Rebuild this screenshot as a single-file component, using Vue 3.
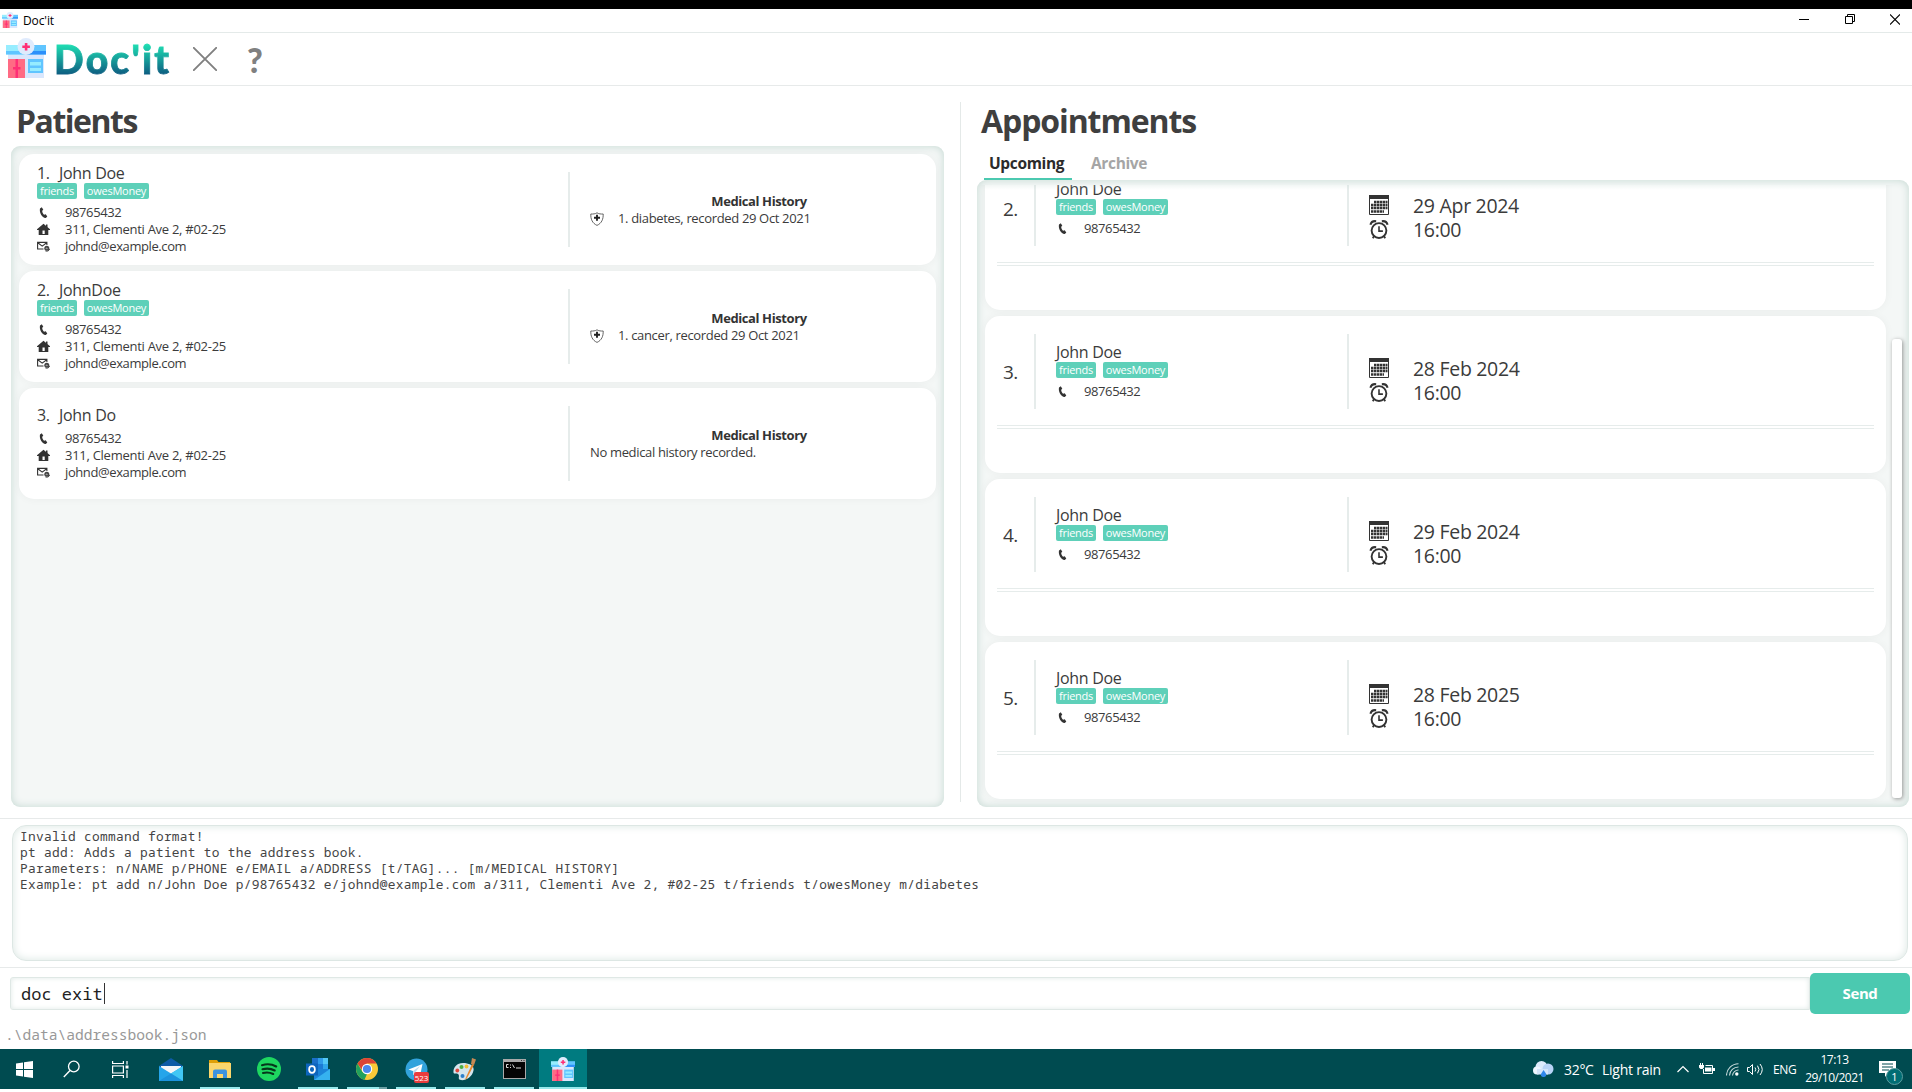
<script setup>
const email = 'johnd@example.com'
const address = '311, Clementi Ave 2, #02-25'
const phone = '98765432'
const tags = ['friends', 'owesMoney']

const patients = [
  { id: 1, name: 'John Doe', tags, history: ['1. diabetes, recorded 29 Oct 2021'] },
  { id: 2, name: 'JohnDoe', tags, history: ['1. cancer, recorded 29 Oct 2021'] },
  { id: 3, name: 'John Do', tags: [], history: [] },
]

const appointments = [
  { id: 2, date: '29 Apr 2024', time: '16:00' },
  { id: 3, date: '28 Feb 2024', time: '16:00' },
  { id: 4, date: '29 Feb 2024', time: '16:00' },
  { id: 5, date: '28 Feb 2025', time: '16:00' },
]

const feedback = [
  'Invalid command format!',
  'pt add: Adds a patient to the address book.',
  'Parameters: n/NAME p/PHONE e/EMAIL a/ADDRESS [t/TAG]... [m/MEDICAL HISTORY]',
  'Example: pt add n/John Doe p/98765432 e/johnd@example.com a/311, Clementi Ave 2, #02-25 t/friends t/owesMoney m/diabetes',
]
</script>

<template>
  <div class="screen">
    <svg class="defs" width="0" height="0">
      <symbol id="clinic" viewBox="0 0 40 40">
        <path d="M2 16h36v24H2z" fill="#d9e7fd" />
        <path d="M2 21h17v19H2z" fill="#ff6b84" />
        <path d="M9.5 21h2.500v19H9.500z" fill="#ff2f76" />
        <path d="M7 29h7.500v2.500H7z" fill="#ff2f76" />
        <path d="M22 21h15v14H22z" fill="#60c5ff" />
        <path d="M24 24h11v3.500H24zM24 30h11v3H24z" fill="#96ecff" />
        <path d="M0 7h20v9.500H0z" fill="#97edff" />
        <path d="M20 7h20v9.500H20z" fill="#60c5ff" />
        <path d="M0 13h20v3.500H0z" fill="#60c5ff" />
        <path d="M20 13h20v3.500H20z" fill="#2d90fb" />
        <circle cx="20" cy="8.500" r="8.500" fill="#dfebfd" />
        <path d="M18.800 5h2.600v7.500h-2.600z" fill="#ff2f76" />
        <path d="M16.300 7.500h7.600V10h-7.600z" fill="#ff2f76" />
      </symbol>
      <symbol id="phone" viewBox="0 0 13 13">
        <path d="M3 2.600 4.800 1.200 6.300 3.700 5.200 4.700C5.200 6.400 6 7.800 7.100 8.800L8.700 8.300 10.300 10.600 8.800 12.100C5.300 12.400 2 6.600 3 2.600z" fill="#333" />
      </symbol>
      <symbol id="home" viewBox="0 0 13 13">
        <path d="M6.500.8 13 6.300V7H11.300V12H1.700V7H0V6.300z" fill="#333" />
        <path d="M9 1.500h1.500v3H9z" fill="#333" />
        <path d="M5.500 7.500h2.200V11H5.500z" fill="#fff" />
      </symbol>
      <symbol id="mail" viewBox="0 0 13 13">
        <path d="M6.500 9H.6V2.400h9.300V5M.8 2.700l4.400 3.400 4.500-3.400" fill="none" stroke="#333" stroke-width="1.100" />
        <circle cx="9.800" cy="8.300" r="2.500" fill="#444" />
        <path d="M8.500 8.600h2.400M9.700 7.400v1.700" stroke="#aaa" stroke-width=".7" />
        <path d="M8.500 11c2 .5 3.600-.2 4.100-2" fill="none" stroke="#333" stroke-width=".9" />
      </symbol>
      <symbol id="shield" viewBox="0 0 14 14">
        <path d="M7 .8C5.300 2 3 2.100.8 2 .6 7 2.300 11.300 7 13.400 11.700 11.300 13.400 7 13.200 2 11 2.100 8.700 2 7 .8z" fill="none" stroke="#555" stroke-width=".9" />
        <path d="M7 2.800v6M4 5.800h6" stroke="#222" stroke-width="1.900" />
      </symbol>
      <symbol id="calendar" viewBox="0 0 20 20">
        <path d="M.5.5h19v19H.5z" fill="#fff" stroke="#333" />
        <path d="M0 0h20v4H0z" fill="#333" />
        <path d="M5 7h13.500M2 10h16.500M2 13h16.500M2 16.500h13" stroke="#333" stroke-width="2.300" stroke-dasharray="2.500 .5" />
      </symbol>
      <symbol id="clock" viewBox="0 0 18 18">
        <circle cx="9" cy="10" r="7" fill="none" stroke="#333" stroke-width="1.800" />
        <path d="M9 6v4.500h3.700" fill="none" stroke="#333" stroke-width="1.500" />
        <path d="M.9 4.500C1.500 2.300 3.500.8 6.300 1.200M17.100 4.500C16.500 2.300 14.500.8 11.700 1.200" fill="none" stroke="#333" stroke-width="2" />
        <path d="m4.500 15-1.400 2.200m10.400-2.200 1.400 2.200" stroke="#333" stroke-width="1.700" />
      </symbol>
    </svg>

    <div class="black-strip"></div>
    <header class="titlebar">
      <svg class="title-icon" width="16" height="16"><use href="#clinic" /></svg>
      <span class="title">Doc'it</span>
      <div class="win-controls">
        <svg width="10" height="11" viewBox="0 0 10 11"><path d="M0 5.500h10" stroke="#000" /></svg>
        <svg width="10" height="11" viewBox="0 0 10 11"><path d="M.5 2.500h7v7h-7zM2.500 2.500v-2h7v7h-2" fill="none" stroke="#000" /></svg>
        <svg width="10" height="11" viewBox="0 0 10 11"><path d="m0 .5 10 10m0-10-10 10" stroke="#000" stroke-width="1.100" /></svg>
      </div>
    </header>

    <nav class="toolbar">
      <svg class="brand-icon" width="40" height="40"><use href="#clinic" /></svg>
      <span class="brand">Doc'it</span>
      <svg class="exit" width="24" height="24" viewBox="0 0 24 24"><path d="m.8.8 22.400 22.400m0-22.400L.8 23.200" stroke="#808080" stroke-width="1.900" stroke-linecap="round" /></svg>
      <span class="help">?</span>
    </nav>

    <main class="content">
      <section class="patients">
        <h1>Patients</h1>
        <div class="panel patient-list">
          <article v-for="p in patients" :key="p.id" class="card patient">
            <div class="person">
              <div class="name"><span class="idx">{{ p.id }}.</span><span>{{ p.name }}</span></div>
              <div v-if="p.tags.length" class="tags"><span v-for="t in p.tags" :key="t" class="tag" :class="t">{{ t }}</span></div>
              <div class="fields">
                <div class="field"><svg width="13" height="13"><use href="#phone" /></svg><span>{{ phone }}</span></div>
                <div class="field address"><svg width="13" height="13"><use href="#home" /></svg><span>{{ address }}</span></div>
                <div class="field"><svg width="13" height="13"><use href="#mail" /></svg><span>{{ email }}</span></div>
              </div>
            </div>
            <div class="rule"></div>
            <div class="history">
              <h2>Medical History</h2>
              <div v-for="h in p.history" :key="h" class="field"><svg width="14" height="14"><use href="#shield" /></svg><span>{{ h }}</span></div>
              <div v-if="!p.history.length" class="field none"><span>No medical history recorded.</span></div>
            </div>
          </article>
        </div>
      </section>

      <div class="splitter"></div>

      <section class="appointments">
        <h1>Appointments</h1>
        <div class="tabs">
          <span class="tab active">Upcoming</span>
          <span class="tab">Archive</span>
        </div>
        <div class="panel appt-panel">
          <div class="viewport">
            <article v-for="a in appointments" :key="a.id" class="card appt">
              <div class="appt-main">
                <div class="appt-no">{{ a.id }}.</div>
                <div class="rule"></div>
                <div class="appt-person">
                  <div class="name">John Doe</div>
                  <div class="tags"><span v-for="t in tags" :key="t" class="tag" :class="t">{{ t }}</span></div>
                  <div class="fields"><div class="field"><svg width="13" height="13"><use href="#phone" /></svg><span>{{ phone }}</span></div></div>
                </div>
                <div class="rule"></div>
                <div class="when">
                  <div class="when-row"><svg width="20" height="20"><use href="#calendar" /></svg><span>{{ a.date }}</span></div>
                  <div class="when-row"><svg width="20" height="19"><use href="#clock" /></svg><span>{{ a.time }}</span></div>
                </div>
              </div>
              <div class="double-rule"></div>
            </article>
            <div class="top-shade"></div>
          </div>
          <div class="track"><div class="thumb"></div></div>
        </div>
      </section>
    </main>

    <section class="feedback">
      <div class="feedback-box"><div v-for="line in feedback" :key="line">{{ line }}</div></div>
    </section>

    <section class="command">
      <div class="input">doc exit<i class="caret"></i></div>
      <button class="send">Send</button>
    </section>

    <footer class="status">.\data\addressbook.json</footer>

    <div class="taskbar">
      <div class="tb sys"><svg width="17" height="17" viewBox="0 0 17 17"><path d="M0 2.500 7 1.500V8H0zM8 1.300 17 0v8H8zM0 9h7v6.500L0 14.500zM8 9h9v8l-9-1.300z" fill="#fff" /></svg></div>
      <div class="tb sys"><svg width="18" height="18" viewBox="0 0 18 18"><circle cx="10.800" cy="6.500" r="5.300" fill="none" stroke="#fff" stroke-width="1.300" /><path d="M7 10.500.8 17" stroke="#fff" stroke-width="1.400" /></svg></div>
      <div class="tb sys"><svg width="17" height="17" viewBox="0 0 17 17"><path d="M.6 0v2.500h10.800V0M.6 17v-2.500h10.800V17M.6 5h10.800v7H.6zM15 0v3.500M15 9v8" fill="none" stroke="#fff" stroke-width="1.200" /><path d="M13.500 4.500h3v3h-3z" fill="#fff" /></svg></div>
      <div class="tb app1"><svg width="24" height="23" viewBox="0 0 24 23"><path d="M0 8 12 0l12 8v3H0z" fill="#0d5ba6" /><path d="M2 8h20v9H2z" fill="#f4f6f8" /><path d="M0 8l12 7.500L24 8v15H0z" fill="#25a5ea" /><path d="M24 8 12 15.500 24 23z" fill="#41c7f4" /><path d="M0 23h24L12 15.500z" fill="#1c93dd" /></svg></div>
      <div class="tb open"><svg width="22" height="20" viewBox="0 0 22 20"><path d="M0 1h8l1.500 2H21v4H0z" fill="#dfa008" /><path d="M0 4h22v15H0z" fill="#fbd66c" /><path d="M4 19v-6.500q0-2 2-2h10q2 0 2 2V19h-4v-4H8v4z" fill="#3b93df" /></svg></div>
      <div class="tb"><svg width="24" height="24" viewBox="0 0 24 24"><circle cx="12" cy="12" r="12" fill="#1ed760" /><path d="M5 8.200c5-1.500 10.300-.9 14.200 1.300M5.500 12.300c4.500-1.300 8.500-.8 12.200 1.200M6 16c3.800-1 7-.6 10.200 1" fill="none" stroke="#06361b" stroke-width="2.100" stroke-linecap="round" /></svg></div>
      <div class="tb open"><svg width="24" height="22" viewBox="0 0 24 22"><path d="M6 0h16v15H6z" fill="#1a6fc9" /><path d="M12 0h5v6h-5z" fill="#2f9bea" /><path d="M17 0h5v6h-5z" fill="#52c8f7" /><path d="M12 6h5v5h-5z" fill="#1c7bd5" /><path d="M17 6h5v5h-5z" fill="#30a7ec" /><path d="M8 11h16v11H8z" fill="#1b84d8" /><path d="M24 11 8 22h16z" fill="#36b2ef" /><path d="M0 5.500h12v12H0z" fill="#0d65bd" /><ellipse cx="6" cy="11.500" rx="2.900" ry="3.300" fill="none" stroke="#fff" stroke-width="1.700" /></svg></div>
      <div class="tb open chrome"><svg width="22" height="22" viewBox="0 0 22 22"><circle cx="11" cy="11" r="11" fill="#f9c938" /><path d="M20.500 5.500H11L6 12 1.500 5.500A11 11 0 0 1 20.500 5.500z" fill="#dc4437" /><path d="M1.500 5.500 6.500 14l4.500 2-2.500 5.700A11 11 0 0 1 1.500 5.500z" fill="#21a15d" /><circle cx="11" cy="11" r="5.200" fill="#fff" /><circle cx="11" cy="11" r="4.100" fill="#4a87ee" /></svg></div>
      <div class="tb open"><svg width="23" height="23" viewBox="0 0 23 23"><circle cx="11.500" cy="11.500" r="11" fill="#32a3dc" /><path d="M3.500 11.500 17.500 6l-2.500 12-4.500-3-2 2-.5-4z" fill="#fff" /><path d="m8 13 7-5-4.500 6-2 3z" fill="#bddcf0" /></svg><span class="badge">523</span></div>
      <div class="tb open"><svg width="24" height="24" viewBox="0 0 24 24"><path d="M10 6C3.500 6 0 11 .5 15.500c.3 2.300 3.500 0 5 2 1.300 2-1 4 1.500 5.300C11 24.500 19 21 20.500 13.500 21.500 8.500 16 6 10 6z" fill="#d3e5ee" /><circle cx="8.500" cy="10" r="2" fill="#4aaf45" /><circle cx="4.300" cy="13.500" r="1.900" fill="#df493e" /><circle cx="13.500" cy="9.500" r="1.900" fill="#f3bf35" /><circle cx="9.500" cy="19" r="2" fill="#2c7fc9" /><path d="M12 22.500 19 7l2 1-7.500 14z" fill="#e8882e" /><path d="m18 7 1-6 4 1.500L21 8z" fill="#c68a55" /></svg></div>
      <div class="tb open"><svg width="23" height="20" viewBox="0 0 23 20"><path d="M0 0h23v20H0z" fill="#a9a9a9" /><path d="M1 3h21v16H1z" fill="#050505" /><path d="M18 1.500h1M20.500 1.500h1" stroke="#333" /><path d="M5.500 5.500H3.500v3h2M7.500 5.500v1M7.500 8v1M9.500 5.500l2 3.500M13 9h5" fill="none" stroke="#ddd" /></svg></div>
      <div class="tb current"><svg width="24" height="24"><use href="#clinic" /></svg></div>

      <div class="tray">
        <svg width="21" height="16" viewBox="0 0 21 16"><circle cx="8.500" cy="6" r="6" fill="#dcebfc" /><circle cx="15" cy="8" r="5.500" fill="#b8d4f7" /><circle cx="4" cy="9.500" r="4" fill="#eef6ff" /><path d="M4 8h11v5.500H4z" fill="#d3e5fb" /><path d="M10.500 9c2 3 2.800 3.600 2.800 4.800a2.700 2.200 0 0 1-5.500 0C7.800 12.600 9 12 10.500 9z" fill="#2f86ea" /></svg>
        <span class="temp">32°C</span>
        <span class="rain">Light rain</span>
        <svg class="chev" width="12" height="8" viewBox="0 0 12 8"><path d="m.5 7 5.500-5.500L11.500 7" fill="none" stroke="#fff" stroke-width="1.200" /></svg>
        <svg class="bat" width="16" height="12" viewBox="0 0 16 12"><path d="M6.500 2.500h7v8h-9V6" fill="none" stroke="#fff" /><path d="M6 4.500h6.500v4H6z" fill="#fff" /><path d="M14 5h2v3h-2zM0 2h5v2.500L3.500 6h-2L0 4.500zM1 0h1v2H1zM3 0h1v2H3z" fill="#fff" /></svg>
        <svg class="wifi" width="13" height="13" viewBox="0 0 13 13"><path d="M.5 12.500A12 12 0 0 1 12.500.8M3.500 12.500a9 9 0 0 1 9-8.500M6.500 12.500a6 6 0 0 1 6-5.500" fill="none" stroke="#c9dcdd" stroke-width="1.100" /><circle cx="10.800" cy="11" r="1.700" fill="#fff" /></svg>
        <svg width="17" height="13" viewBox="0 0 17 13"><path d="M.5 4.500h2l3-3v10l-3-3h-2zM8 4.500q1.500 2 0 4M10.500 2.700q3 3.800 0 7.600M13 1q4.500 5.500 0 11" fill="none" stroke="#fff" /></svg>
        <span class="lang">ENG</span>
        <div class="datetime"><span>17:13</span><span>29/10/2021</span></div>
        <div class="notif">
          <svg width="17" height="16" viewBox="0 0 17 16"><path d="M0 0h17v12H9l-3 4v-4H0z" fill="#fff" /><path d="M3 3h11M3 6h11M3 9h7" stroke="#004b50" stroke-width="1.100" /></svg>
          <span class="count">1</span>
        </div>
      </div>
    </div>
  </div>
</template>

<style>
body { margin: 0; background: #fff; overflow: hidden; }
</style>

<style scoped>
.screen { width: 1912px; height: 1092px; display: flex; flex-direction: column; background: #fff; color: #3b3b3b; font-family: "Open Sans", "Noto Sans", sans-serif; overflow: hidden; }
.screen > * { flex: none; box-sizing: border-box; }
svg { display: block; flex: none; }
.defs { position: absolute; }
h1, h2 { margin: 0; }
.black-strip { height: 9px; background: #000; }

.titlebar { height: 24px; border-bottom: 1px solid #e4eae9; display: flex; padding-left: 2px; }
.title-icon { margin-top: 3px; }
.title { margin-left: 5px; font-size: 12px; line-height: 24px; height: 22px; letter-spacing: -.1px; color: #000; }
.win-controls { display: flex; gap: 35.500px; margin-left: auto; margin-right: 12px; padding-top: 5px; }

.toolbar { height: 53px; border-bottom: 1px solid #e7eaea; display: flex; padding-left: 6px; }
.brand-icon { margin-top: 5px; }
.brand { margin-left: 8px; width: 139px; font: 900 39px/53px "Lato", sans-serif; letter-spacing: 2.200px; -webkit-text-stroke: .8px transparent; background: linear-gradient(#1fdcb2 12px, #0d5a80 42px); background-clip: text; -webkit-background-clip: text; color: transparent; }
.exit { margin-top: 14px; }
.help { margin-left: 30px; font: 900 34px/53px "Lato", sans-serif; color: #808080; }

.content { height: 732px; display: flex; }
.patients { width: 944px; padding-left: 11px; box-sizing: border-box; display: flex; flex-direction: column; }
h1 { font-size: 32px; line-height: 39px; height: 40px; letter-spacing: -1.100px; font-weight: 700; color: #3f3f3f; }
.patients h1 { margin: 15px 0 5px 5px; letter-spacing: -1.500px; }
.panel { background: #f4f7f6; border-radius: 9px; box-shadow: inset 0 0 9px #c4d8d2; }
.patient-list { height: 661px; padding: 8px; box-sizing: border-box; display: flex; flex-direction: column; gap: 6px; }
.card { background: #fff; border-radius: 15px; box-shadow: 0 0 10px rgba(0, 0, 0, .045); }
.patient { height: 111px; display: flex; align-items: center; }
.person { width: 531px; padding: 0 0 2px 18px; }
.name { font-size: 16px; line-height: 23px; height: 21px; letter-spacing: -.3px; white-space: nowrap; }
.idx { display: inline-block; width: 22px; }
.tags { display: flex; gap: 7px; height: 16px; }
.tag { background: #5ed0b9; color: #fff; border-radius: 2px; font-size: 11px; line-height: 16px; letter-spacing: -.25px; text-align: center; width: 40px; white-space: nowrap; }
.tag.owesMoney { width: 65px; }
.fields { padding-top: 5px; }
.field { display: flex; align-items: center; height: 17px; font-size: 13px; line-height: 17px; letter-spacing: -.4px; white-space: nowrap; }
.field.address { letter-spacing: -.27px; }
.field span { margin-left: 15px; }
.rule { width: 2px; height: 75px; background: #e6eceb; flex: none; }
.history { width: 338px; margin-left: 20px; padding-top: 1px; }
.history h2 { font-size: 13px; line-height: 17px; text-align: center; letter-spacing: -.4px; color: #333; }
.history .field { letter-spacing: -.34px; }
.history .field span { margin-left: 14px; }
.history .none span { margin-left: 0; }

.splitter { width: 1px; height: 700px; margin: 16px 16px 0; background: #e4e9e8; }
.appointments { width: 932px; display: flex; flex-direction: column; }
.appointments h1 { margin: 15px 0 0 4px; }
.tabs { height: 39px; display: flex; padding-left: 7px; box-sizing: border-box; }
.tab { font-size: 15.500px; font-weight: 700; letter-spacing: -.35px; line-height: 44px; height: 39px; padding: 0 5px; color: #a5a5a5; box-sizing: border-box; width: 88px; }
.tab.active { color: #2b2b2b; border-bottom: 2px solid #4bc9b0; margin-right: 14px; }
.appt-panel { height: 627px; padding: 5px 7px 8px 8px; box-sizing: border-box; display: flex; }
.viewport { position: relative; width: 901px; height: 614px; display: flex; flex-direction: column; justify-content: flex-end; gap: 6px; clip-path: inset(0 -6px -6px -8px); }
.top-shade { position: absolute; left: 0; top: 0; width: 901px; height: 5px; background: linear-gradient(rgba(196, 216, 210, .22), rgba(196, 216, 210, 0)); }
.appt { height: 157px; flex: none; }
.appt-main { height: 109px; display: flex; padding-top: 18px; box-sizing: border-box; }
.appt-no { width: 49px; padding: 27px 0 0 18px; box-sizing: border-box; font-size: 19px; line-height: 22px; letter-spacing: -.6px; height: 75px; }
.appt-person { width: 311px; padding: 7px 0 0 20px; box-sizing: border-box; }
.when { padding: 23px 0 0 20px; }
.when-row { display: flex; align-items: center; height: 24px; font-size: 19.500px; letter-spacing: -.3px; margin-top: -1px; margin-bottom: 1px; }
.when-row span { margin-left: 24px; white-space: nowrap; }
.double-rule { height: 2px; margin: 0 12px; border: 1px solid #e6eceb; border-width: 1px 0; }
.track { width: 10px; margin-left: 6px; padding-top: 154px; }
.thumb { height: 459px; border-radius: 3px; background: #fff; box-shadow: 1px 1px 4px rgba(0, 0, 0, .4); }

.feedback { height: 150px; border-top: 1px solid #e7eaea; border-bottom: 1px solid #e7eaea; padding: 6px 4px 0 12px; }
.feedback-box { height: 136px; box-sizing: border-box; padding: 2px 7px; border: 1px solid #dde7e4; border-radius: 14px; box-shadow: inset 0 0 8px #d9e5e1; font: 12.800px/16px "Noto Sans Mono", "DejaVu Sans Mono", monospace; letter-spacing: .315px; white-space: pre; color: #444; }
.command { height: 46px; padding: 5px 2px 0 10px; display: flex; }
.input { width: 1800px; height: 33px; margin-top: 4px; border: 1px solid #dfe8e5; box-shadow: inset 0 0 5px #dfe9e6; border-radius: 3px 0 0 3px; padding-left: 10px; box-sizing: border-box; display: flex; align-items: center; font: 17px/31px "Noto Sans Mono", "DejaVu Sans Mono", monospace; color: #222; white-space: pre; }
.caret { width: 1px; height: 21px; margin-left: 1px; background: #333; }
.send { width: 100px; height: 41px; border: 0; border-radius: 5px; padding: 0 0 1px; background: #4bc9b0; color: #fff; font: 700 15px "Open Sans", sans-serif; letter-spacing: -.4px; }
.status { height: 35px; padding-left: 5px; font: 14.600px/40px "Noto Sans Mono", "DejaVu Sans Mono", monospace; color: #989898; }

.taskbar { height: 40px; background: #004b50; display: flex; color: #fff; }
.tb { width: 40px; height: 40px; margin-right: 9px; box-sizing: border-box; display: flex; align-items: center; justify-content: center; position: relative; flex: none; }
.tb.sys { width: 48px; margin-right: 0; }
.tb.app1 { margin-left: 7px; }
.open { border-bottom: 2px solid #98e9ec; padding-top: 2px; }
.chrome { border-image: linear-gradient(90deg, #98e9ec 31px, #6da0a4 31px) 2; border-width: 0 0 2px; }
.tb.current { width: 48px; margin: 0 0 0 -4px; background: #007b80; border-bottom: 2px solid #98e9ec; padding-top: 2px; }
.badge { position: absolute; left: 18px; top: 23px; width: 15px; height: 11px; border-radius: 2px; background: #e93c3c; font-size: 8px; line-height: 11px; text-align: center; }
.tray { margin-left: auto; display: flex; align-items: center; width: 379px; }
.temp { margin-left: 10px; width: 38px; font-size: 14px; letter-spacing: -.3px; }
.rain { width: 75px; font-size: 14px; letter-spacing: -.25px; white-space: nowrap; }
.chev { margin-right: 10px; }
.bat { margin-right: 11px; }
.wifi { margin-right: 8px; }
.lang { margin-left: 9px; width: 33px; font-size: 12px; letter-spacing: -.3px; }
.datetime { width: 57px; display: flex; flex-direction: column; align-items: center; font-size: 12px; line-height: 18px; letter-spacing: -.5px; white-space: nowrap; }
.notif { position: relative; margin-left: 16px; padding-bottom: 1px; }
.count { position: absolute; left: 7px; top: 7px; width: 17px; height: 17px; box-sizing: border-box; border: 1px solid #5b9da0; border-radius: 50%; background: #006d73; font-size: 11px; line-height: 15px; text-align: center; }
</style>
